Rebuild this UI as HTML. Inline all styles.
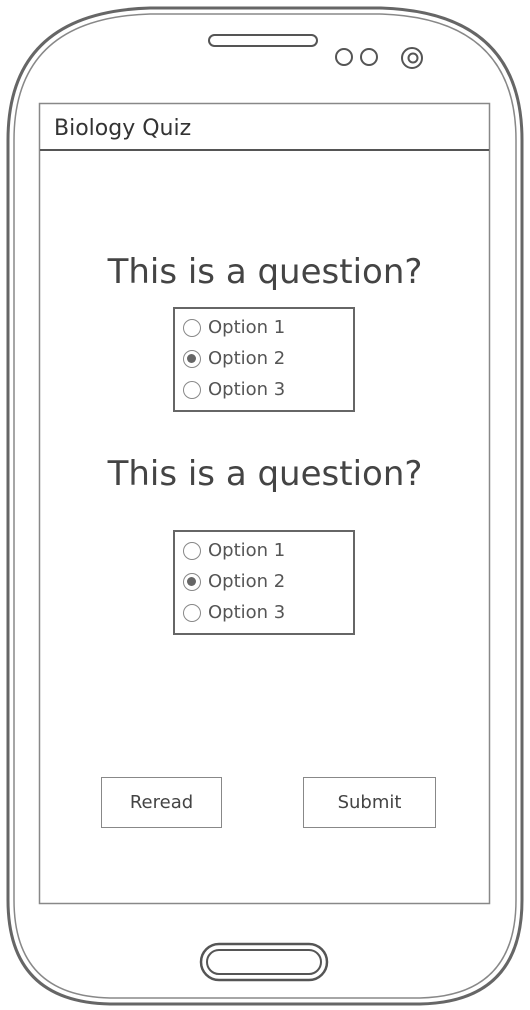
<!DOCTYPE html>
<html><head><meta charset="utf-8"><style>
*{margin:0;padding:0;box-sizing:border-box}
body{width:530px;height:1010px;background:#fff;position:relative;overflow:hidden;font-family:"DejaVu Sans","Liberation Sans",sans-serif;color:#444}
.abs{position:absolute}
.box{position:absolute;border:2px solid #666;background:#fff}
.opt{position:absolute;left:8px;font-size:18px;color:#555;display:flex;align-items:center}
.r{width:18px;height:18px;border:1.5px solid #888;border-radius:50%;margin-right:7px;position:relative;background:#fff}
.r.on::after{content:"";position:absolute;left:3px;top:3px;width:9px;height:9px;border-radius:50%;background:#666}
.q{position:absolute;width:530px;text-align:center;font-size:34px;color:#444;left:0}
.btn{position:absolute;border:1.5px solid #888;font-size:18px;text-align:center;line-height:49px;color:#444}
</style></head><body>
<svg class="abs" style="left:0;top:0" width="530" height="1010">
<path d="M8 140 Q8 12 150 8 L380 8 Q522 12 522 140 L522 900 Q522 1002 420 1004 L110 1004 Q8 1002 8 900 Z" fill="none" stroke="#666" stroke-width="3"/>
<path d="M14 140 Q14 18 150 14 L380 14 Q516 18 516 140 L516 900 Q516 996 420 998 L110 998 Q14 996 14 900 Z" fill="none" stroke="#888" stroke-width="1.5"/>
<rect x="209" y="35" width="108" height="11" rx="5.5" fill="none" stroke="#555" stroke-width="2"/>
<circle cx="344" cy="57" r="8" fill="none" stroke="#555" stroke-width="2"/>
<circle cx="369" cy="57" r="8" fill="none" stroke="#555" stroke-width="2"/>
<circle cx="412" cy="58" r="10" fill="none" stroke="#555" stroke-width="2"/>
<circle cx="413" cy="58" r="4.5" fill="none" stroke="#555" stroke-width="2"/>
<rect x="39.5" y="103.5" width="450" height="800" fill="none" stroke="#888" stroke-width="1.5"/>
<line x1="40" y1="150" x2="489" y2="150" stroke="#555" stroke-width="2"/>
<rect x="201" y="944" width="126" height="36" rx="18" fill="none" stroke="#555" stroke-width="2.5"/>
<rect x="207" y="950" width="114" height="24" rx="12" fill="none" stroke="#555" stroke-width="2"/>
</svg>
<div class="abs" style="left:54px;top:116px;font-size:22px;color:#333">Biology Quiz</div>
<div class="q" style="top:252px">This is a question?</div>
<div class="box" style="left:173px;top:307px;width:182px;height:105px">
<div class="opt" style="top:8px"><span class="r"></span>Option 1</div>
<div class="opt" style="top:39px"><span class="r on"></span>Option 2</div>
<div class="opt" style="top:70px"><span class="r"></span>Option 3</div>
</div>
<div class="q" style="top:454px">This is a question?</div>
<div class="box" style="left:173px;top:530px;width:182px;height:105px">
<div class="opt" style="top:8px"><span class="r"></span>Option 1</div>
<div class="opt" style="top:39px"><span class="r on"></span>Option 2</div>
<div class="opt" style="top:70px"><span class="r"></span>Option 3</div>
</div>
<div class="btn" style="left:101px;top:777px;width:121px;height:51px">Reread</div>
<div class="btn" style="left:303px;top:777px;width:133px;height:51px">Submit</div>
</body></html>
